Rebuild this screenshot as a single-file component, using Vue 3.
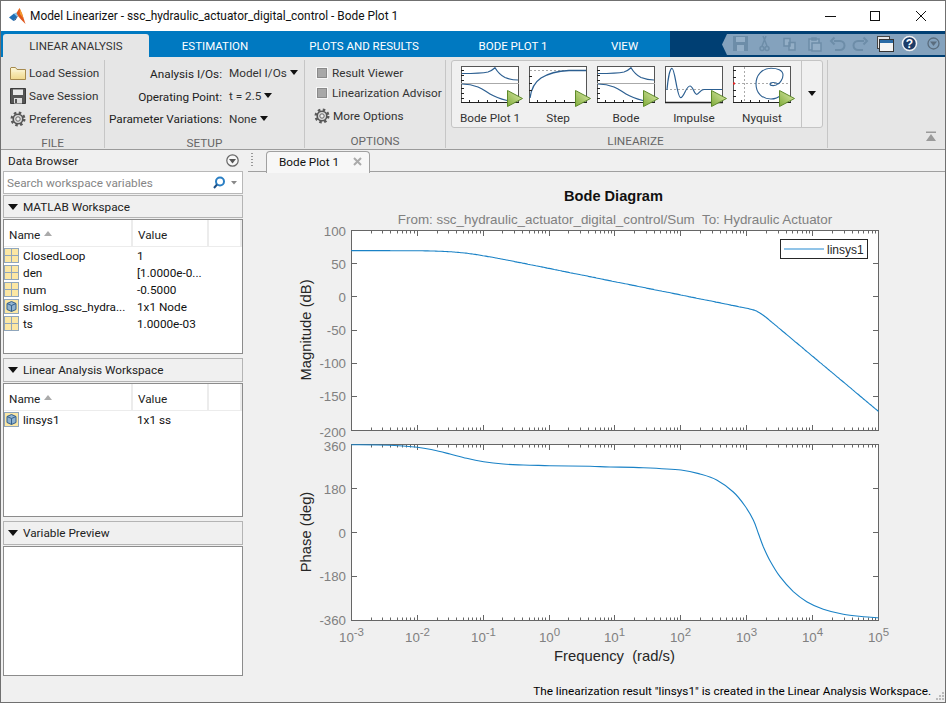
<script setup>
const fileItems = [
  { label: 'Load Session', icon: 'folder' },
  { label: 'Save Session', icon: 'floppy' },
  { label: 'Preferences', icon: 'gear' },
]
const thumbs = [
  { label: 'Bode Plot 1', kind: 'bode' },
  { label: 'Step', kind: 'step' },
  { label: 'Bode', kind: 'bode' },
  { label: 'Impulse', kind: 'impulse' },
  { label: 'Nyquist', kind: 'nyquist' },
]
const workspace = [
  { name: 'ClosedLoop', value: '1', icon: 'matrix' },
  { name: 'den', value: '[1.0000e-0...', icon: 'matrix' },
  { name: 'num', value: '-0.5000', icon: 'matrix' },
  { name: 'simlog_ssc_hydra...', value: '1x1 Node', icon: 'cube' },
  { name: 'ts', value: '1.0000e-03', icon: 'matrix' },
]
const linear = [{ name: 'linsys1', value: '1x1 ss', icon: 'cube' }]
const subtitle = 'From: ssc_hydraulic_actuator_digital_control/Sum  To: Hydraulic Actuator'
const xLabel = 'Frequency  (rad/s)'

const X0 = 351.3
const DEC = 65.9
const X = (d) => X0 + DEC * (d + 3)
const crisp = (v) => Math.round(v - 0.5) + 0.5

const majors = [-3, -2, -1, 0, 1, 2, 3, 4, 5].map((d) => ({ d, x: crisp(X(d)) }))
const minors = []
for (let d = -3; d < 5; d++) {
  for (let m = 2; m < 10; m++) minors.push(crisp(X(d + Math.log10(m))))
}
const magTicks = [
  { t: '100', y: 230.5, b: 236 },
  { t: '50', y: 263.7, b: 269 },
  { t: '0', y: 296.9, b: 302 },
  { t: '-50', y: 330.1, b: 335 },
  { t: '-100', y: 363.3, b: 368 },
  { t: '-150', y: 396.5, b: 401 },
  { t: '-200', y: 430.5, b: 437 },
]
const phaseTicks = [
  { t: '360', y: 444.5, b: 451 },
  { t: '180', y: 488.5, b: 494 },
  { t: '0', y: 532.5, b: 538 },
  { t: '-180', y: 576.5, b: 581 },
  { t: '-360', y: 620.5, b: 625 },
]

function smooth(p) {
  let s = `M${p[0][0].toFixed(1)} ${p[0][1].toFixed(1)}`
  for (let i = 0; i < p.length - 1; i++) {
    const a = p[Math.max(i - 1, 0)]
    const b = p[i]
    const c = p[i + 1]
    const d = p[Math.min(i + 2, p.length - 1)]
    const c1 = [b[0] + (c[0] - a[0]) / 6, b[1] + (c[1] - a[1]) / 6]
    const c2 = [c[0] - (d[0] - b[0]) / 6, c[1] - (d[1] - b[1]) / 6]
    s += `C${c1[0].toFixed(1)} ${c1[1].toFixed(1)} ${c2[0].toFixed(1)} ${c2[1].toFixed(1)} ${c[0].toFixed(1)} ${c[1].toFixed(1)}`
  }
  return s
}

const magPts = []
for (let d = -3; d <= 5.001; d += 0.04) {
  const w = Math.pow(10, d)
  const db =
    70 -
    10 * Math.log10(1 + Math.pow(w / 0.046, 2)) -
    (63 / 10) * Math.log10(1 + Math.pow(w / 1480, 10))
  magPts.push([X(d), 230.7 + ((100 - db) * 199.3) / 300])
}
const magPath = smooth(magPts)

const left = [
  [184, 44], [300, 46], [382, 52], [430, 60], [480, 72], [530, 85], [581, 95],
  [640, 102], [700, 105], [779, 107], [900, 109],
].map(([x, y]) => [290 + x / 3, 430 + y / 3])
const right = [
  [0, 111], [100, 113], [213, 120], [270, 132], [320, 150], [370, 186], [405, 228],
  [430, 270], [445, 310], [460, 350], [480, 392], [510, 440], [550, 485], [590, 515],
  [640, 538], [700, 553], [760, 560], [805, 563],
].map(([x, y]) => [610 + x / 3, 430 + y / 3])
const phasePath = smooth([...left, ...right])
</script>

<template>
  <div class="window">
    <header class="titlebar">
      <svg class="logo" width="17" height="17" viewBox="9 7 17 17">
        <polygon points="9,16.5 14,12.5 17,15.5 13.5,20" fill="#1f6fb5" />
        <polygon points="14,12.5 16.5,11.5 18,14 17,15.5" fill="#7cc0e8" />
        <polygon points="16.5,12 19.5,7 22,12.5 25.5,23 21,18.5 18,15" fill="#e0561b" />
        <polygon points="19.5,7 22,12.5 23.5,17.5 20,13" fill="#f39a2c" />
        <polygon points="13.5,20 17,15.5 18,15 15.5,19" fill="#123f78" />
      </svg>
      <span class="title-text">Model Linearizer - ssc_hydraulic_actuator_digital_control - Bode Plot 1</span>
      <div class="win-controls">
        <svg width="102" height="12" viewBox="0 0 102 12">
          <path d="M0 6.5H11" stroke="#111" fill="none" />
          <rect x="45.5" y="1.5" width="9" height="9" fill="none" stroke="#111" />
          <path d="M91 1L101 11M101 1L91 11" stroke="#111" fill="none" />
        </svg>
      </div>
    </header>

    <nav class="tabstrip">
      <div class="tabs">
        <div class="tab active">LINEAR ANALYSIS</div>
        <div class="tab">ESTIMATION</div>
        <div class="tab">PLOTS AND RESULTS</div>
        <div class="tab">BODE PLOT 1</div>
        <div class="tab">VIEW</div>
      </div>
      <div class="quick-wrap">
        <div class="quick">
          <svg width="224" height="21" viewBox="722 34 224 21">
            <g fill="#6d8da8">
              <path d="M733 36H748V51H733Z" />
              <rect x="736" y="37" width="9" height="5" fill="#93aec6" />
              <rect x="737" y="45" width="7" height="6" fill="#93aec6" />
            </g>
            <g fill="none" stroke="#6d8da8" stroke-width="1.5">
              <path d="M766 36L762 46M763 36L767 46" />
              <circle cx="762" cy="48.5" r="2" />
              <circle cx="767" cy="48.5" r="2" />
              <path d="M784 38.5H790V46H784ZM789 42.5H795V50H789Z" fill="#93aec6" />
              <path d="M809 39H819V50H809Z" fill="#93aec6" />
              <path d="M812 43H821V51H812Z" fill="#93aec6" />
              <path d="M812 38H816V40H812Z" />
              <path d="M834 41H840A4.5 4.5 0 0 1 840 50H835M834.500 37.500L831 41L834.500 44.500" stroke-width="2" />
              <path d="M864 41H858A4.500 4.500 0 0 0 858 50H863M863.500 37.500L867 41L863.500 44.500" stroke-width="2" />
            </g>
            <rect x="877.500" y="36.500" width="12" height="12" fill="#e8e8e8" stroke="#444" />
            <rect x="879.500" y="39.500" width="14" height="12" fill="#f4f4f4" stroke="#333" />
            <rect x="880" y="40" width="13" height="3" fill="#2a6aa5" />
            <circle cx="909.500" cy="43.500" r="7" fill="#1c3c68" stroke="#f2f2f2" stroke-width="1.500" />
            <text x="909.500" y="48" class="q-mark" text-anchor="middle">?</text>
            <circle cx="933.500" cy="43.500" r="5.500" fill="none" stroke="#5a6d7e" stroke-width="1.300" />
            <path d="M930 41.500H937L933.500 46Z" fill="#5a6d7e" />
          </svg>
        </div>
      </div>
    </nav>

    <section class="ribbon">
      <div class="group g-file">
        <div class="group-body file-list">
          <div v-for="item in fileItems" :key="item.label" class="row">
            <svg class="row-icon" width="16" height="16" viewBox="0 0 16 16">
              <template v-if="item.icon === 'folder'">
                <path d="M0.500 3V14.500H15.500V4.500H7L5.500 2.500H1Z" fill="url(#folderGrad)" stroke="#a68a4e" />
                <path d="M2 6H15" stroke="#f9f2d0" />
              </template>
              <template v-else-if="item.icon === 'floppy'">
                <path d="M0.500 0.500H15.500V15.500H0.500Z" fill="#555" stroke="#3c3c3c" />
                <rect x="3" y="1.500" width="10" height="5.500" fill="#e8e8e8" />
                <rect x="4" y="10" width="8" height="5.500" fill="#dcdcdc" />
                <rect x="5" y="11" width="2" height="4" fill="#555" />
              </template>
              <use v-else href="#gear" />
            </svg>
            <span>{{ item.label }}</span>
          </div>
        </div>
        <div class="group-label">FILE</div>
      </div>

      <div class="group g-setup">
        <div class="group-body setup-grid">
          <span class="setup-label down">Analysis I/Os:</span>
          <span class="setup-value">Model I/Os<i class="caret"></i></span>
          <span class="setup-label down">Operating Point:</span>
          <span class="setup-value">t = 2.5<i class="caret"></i></span>
          <span class="setup-label">Parameter Variations:</span>
          <span class="setup-value">None<i class="caret"></i></span>
        </div>
        <div class="group-label">SETUP</div>
      </div>

      <div class="group g-options">
        <div class="group-body options-list">
          <div class="check-row"><i class="checkbox"></i><span>Result Viewer</span></div>
          <div class="check-row"><i class="checkbox"></i><span>Linearization Advisor</span></div>
          <div class="more-row">
            <svg width="16" height="16" viewBox="0 0 16 16"><use href="#gear" /></svg>
            <span>More Options</span>
          </div>
        </div>
        <div class="group-label">OPTIONS</div>
      </div>

      <div class="group g-linearize">
        <div class="gallery">
          <div class="gallery-items">
            <div v-for="(th, i) in thumbs" :key="i" class="thumb">
              <svg class="thumb-svg" width="64" height="42" viewBox="0 0 64 42">
                <rect x="0.500" y="0.500" width="57" height="36" fill="#fff" stroke="#555" />
                <path d="M0 36.500H58" stroke="#222" />
                <template v-if="th.kind === 'bode'">
                  <path d="M0 17.500H58" stroke="#aaa" />
                  <path d="M1 7.500C10 7.500 20 7.500 27 6C30 5 32 3.500 34 1.700C36 5 39 9 44 11.500C48 13 53 14 57 14" fill="none" stroke="#2c5f91" stroke-width="1.200" />
                  <path d="M1 18C7 18 12 19 17 21C22 23 24 25 29 28C34 31 40 33 46 34.500" fill="none" stroke="#2c5f91" stroke-width="1.200" />
                  <path d="M0 4.500H3M0 9.500H3M0 14.500H3M0 22.500H3M0 27.500H3M0 32.500H3M8.500 37V34M17.500 37V34M26.500 37V34M35.500 37V34" stroke="#222" />
                </template>
                <template v-else-if="th.kind === 'step'">
                  <path d="M1 4.500H57" stroke="#aaa" stroke-dasharray="2 2" />
                  <path d="M1 32C2 24 6 16 12 12C20 7 30 5 40 4.500H57" fill="none" stroke="#2c5f91" stroke-width="1.300" />
                  <path d="M0 10.500H3M0 17.500H3M0 24.500H3M8.500 37V34M17.500 37V34M26.500 37V34M35.500 37V34" stroke="#222" />
                </template>
                <template v-else-if="th.kind === 'impulse'">
                  <path d="M1 23.500H57" stroke="#aaa" stroke-dasharray="2 2" />
                  <path d="M2 24C3 12 5 2.300 7 2.300C10 2.300 12 31.700 15.700 31.700C19 31.700 21 20 25 20C28 20 29 28.300 31.700 28.300C34 28.300 35 23.500 39 23.500H57" fill="none" stroke="#2c5f91" stroke-width="1.200" />
                  <path d="M0 36.500H58" stroke="#222" stroke-width="1.500" />
                </template>
                <template v-else>
                  <path d="M1 17.500H57" stroke="#aaa" stroke-dasharray="2 2" />
                  <path d="M11.500 1V36" stroke="#aaa" stroke-dasharray="2 2" />
                  <path d="M0 17.500H2" stroke="#e22" stroke-width="2" />
                  <path d="M45 17.500C43 20.500 37 20 37 18C37 16 43 16 45 18C47 17 50 13 50 9C50 4 44 2.300 38 2.300C29 2.300 23 9 23 18C23 27 29 33 38 33C42 33 45 32 48 29" fill="none" stroke="#2c5f91" stroke-width="1.100" />
                  <path d="M0 4.500H3M0 11.500H3M0 24.500H3M0 30.500H3M8.500 37V34M17.500 37V34M26.500 37V34M35.500 37V34" stroke="#222" />
                </template>
                <path d="M46.500 24.500V40.500L61.500 32.500Z" fill="url(#playGrad)" stroke="#5e8a2a" stroke-linejoin="round" />
              </svg>
              <span class="thumb-label">{{ th.label }}</span>
            </div>
          </div>
          <div class="gallery-more"><i class="caret"></i></div>
        </div>
        <div class="group-label">LINEARIZE</div>
      </div>

      <div class="ribbon-rest">
        <svg width="12" height="12" viewBox="0 0 12 12">
          <path d="M1 0.500H11V2H1Z M6 3L11 10H1Z" fill="#9a9a9a" />
        </svg>
      </div>
    </section>

    <main class="main">
      <aside class="sidebar">
        <div class="browser-head">
          <span>Data Browser</span>
          <svg width="13" height="13" viewBox="0 0 13 13">
            <circle cx="6.500" cy="6.500" r="5.700" fill="#f7f7f7" stroke="#666" stroke-width="1.200" />
            <path d="M3 5H10L6.500 9.500Z" fill="#555" />
          </svg>
        </div>
        <div class="search">
          <span class="placeholder">Search workspace variables</span>
          <svg width="24" height="14" viewBox="0 0 24 14">
            <circle cx="7" cy="5.500" r="4" fill="none" stroke="#2a7fc4" stroke-width="2" />
            <path d="M4 8.500L1 12" stroke="#1c4f86" stroke-width="2" />
            <path d="M18 5H24L21 8.500Z" fill="#888" />
          </svg>
        </div>

        <div class="section-head"><i class="tri"></i>MATLAB Workspace</div>
        <div class="table-box tall">
          <div class="t-head">
            <div class="th c-name">Name<i class="sort"></i></div>
            <div class="th c-value">Value</div>
            <div class="th c-extra"></div>
          </div>
          <div v-for="r in workspace" :key="r.name" class="t-row">
            <svg class="var-icon" width="15" height="15" viewBox="0 0 15 15"><use :href="'#' + r.icon" /></svg>
            <span class="t-name">{{ r.name }}</span>
            <span class="t-value">{{ r.value }}</span>
          </div>
        </div>

        <div class="section-head tall-head"><i class="tri"></i>Linear Analysis Workspace</div>
        <div class="table-box tall2">
          <div class="t-head">
            <div class="th c-name">Name<i class="sort"></i></div>
            <div class="th c-value">Value</div>
            <div class="th c-extra"></div>
          </div>
          <div v-for="r in linear" :key="r.name" class="t-row">
            <svg class="var-icon" width="15" height="15" viewBox="0 0 15 15"><use :href="'#' + r.icon" /></svg>
            <span class="t-name">{{ r.name }}</span>
            <span class="t-value">{{ r.value }}</span>
          </div>
        </div>

        <div class="section-head tall-head"><i class="tri"></i>Variable Preview</div>
        <div class="table-box preview"></div>
      </aside>

      <div class="content">
        <div class="doc-tabs">
          <div class="grip"></div>
          <div class="doc-tab">
            <span>Bode Plot 1</span>
            <svg width="9" height="9" viewBox="0 0 9 9">
              <path d="M1 1L8 8M8 1L1 8" stroke="#aaa" stroke-width="2" />
            </svg>
          </div>
        </div>

        <svg class="plot" width="697" height="507" viewBox="248 172 697 507">
          <rect x="351.500" y="230.500" width="527" height="200" fill="#fff" stroke="#666" />
          <rect x="351.500" y="444.500" width="527" height="176" fill="#fff" stroke="#666" />
          <g stroke="#666" fill="none">
            <template v-for="m in majors" :key="m.d">
              <path :d="`M${m.x} 231V236M${m.x} 430V425M${m.x} 445V450M${m.x} 620V615`" />
            </template>
            <template v-for="(x, i) in minors" :key="i">
              <path :d="`M${x} 231V233.500M${x} 430V427.500M${x} 445V447.500M${x} 620V617.500`" />
            </template>
            <template v-for="t in magTicks" :key="t.t">
              <path :d="`M352 ${crisp(t.y)}H357M878 ${crisp(t.y)}H873`" />
            </template>
            <template v-for="t in phaseTicks" :key="t.t">
              <path :d="`M352 ${crisp(t.y)}H357M878 ${crisp(t.y)}H873`" />
            </template>
          </g>
          <path :d="magPath" fill="none" stroke="#1a82c6" stroke-width="1.100" />
          <path :d="phasePath" fill="none" stroke="#1a82c6" stroke-width="1.100" />

          <text v-for="t in magTicks" :key="t.t" class="tick" x="346" :y="t.b" text-anchor="end">{{ t.t }}</text>
          <text v-for="t in phaseTicks" :key="t.t" class="tick" x="346" :y="t.b" text-anchor="end">{{ t.t }}</text>
          <text v-for="m in majors" :key="m.d" class="tick" :x="m.x" y="642" text-anchor="middle">10<tspan class="exp" dy="-6">{{ m.d }}</tspan></text>

          <text class="plot-title" x="613.500" y="201" text-anchor="middle">Bode Diagram</text>
          <text class="plot-sub" x="615" y="224" text-anchor="middle">{{ subtitle }}</text>
          <text class="axis-label" transform="translate(311 330) rotate(-90)" text-anchor="middle">Magnitude (dB)</text>
          <text class="axis-label" transform="translate(311 532) rotate(-90)" text-anchor="middle">Phase (deg)</text>
          <text class="axis-label" x="614.500" y="661" text-anchor="middle">{{ xLabel }}</text>

          <rect x="780.500" y="239.500" width="87" height="19" fill="#fff" stroke="#262626" />
          <path d="M784 249H824" stroke="#6cb0e0" stroke-width="1.600" />
          <text class="legend" x="827" y="254">linsys1</text>
        </svg>

        <div class="status">
          <span>The linearization result "linsys1" is created in the Linear Analysis Workspace.</span>
          <svg class="resize" width="10" height="10" viewBox="0 0 10 10">
            <path d="M7 1h2v2h-2zM4 4h2v2h-2zM7 4h2v2h-2zM1 7h2v2h-2zM4 7h2v2h-2zM7 7h2v2h-2z" fill="#bbb" />
          </svg>
        </div>
      </div>
    </main>

    <svg class="defs" width="0" height="0">
      <defs>
        <linearGradient id="playGrad" x1="0" y1="1" x2="1" y2="0">
          <stop offset="0" stop-color="#7fab3a" />
          <stop offset="1" stop-color="#e2eeb0" />
        </linearGradient>
        <linearGradient id="folderGrad" x1="0" y1="0" x2="0" y2="1">
          <stop offset="0" stop-color="#fdf7d6" />
          <stop offset="1" stop-color="#efd88c" />
        </linearGradient>
        <symbol id="gear" viewBox="0 0 16 16">
          <circle cx="8" cy="8" r="6.300" fill="none" stroke="#5a5a5a" stroke-width="2.400" stroke-dasharray="2.500 2.450" />
          <circle cx="8" cy="8" r="4.800" fill="#d8d8d8" stroke="#555" stroke-width="1.600" />
          <circle cx="8" cy="8" r="2.200" fill="#eee" stroke="#666" />
        </symbol>
        <symbol id="matrix" viewBox="0 0 15 15">
          <rect x="0.500" y="0.500" width="14" height="14" fill="#fbe7a4" stroke="#90a6bc" />
          <path d="M7.500 1V14M1 7.500H14" stroke="#90a6bc" />
        </symbol>
        <symbol id="cube" viewBox="0 0 15 15">
          <rect x="0.500" y="0.500" width="14" height="14" fill="#fbe7a4" stroke="#90a6bc" />
          <path d="M3 4.500L7.500 2.500L12 4.500V10.500L7.500 12.500L3 10.500Z" fill="#8fb2cf" stroke="#35608c" />
          <path d="M3 4.500L7.500 6.500L12 4.500M7.500 6.500V12.500" fill="none" stroke="#35608c" />
        </symbol>
      </defs>
    </svg>
  </div>
</template>

<style scoped>
.window {
  width: 946px;
  height: 703px;
  box-sizing: border-box;
  border: 1px solid #707070;
  background: #f0f0f0;
  display: flex;
  flex-direction: column;
  overflow: hidden;
  font-family: Roboto, "Noto Sans", sans-serif;
  font-size: 11.75px;
  color: #1a1a1a;
}
.titlebar {
  height: 30px;
  flex: none;
  background: #fff;
  display: flex;
  align-items: center;
  padding-left: 8px;
  font-size: 11.9px;
  color: #111;
}
.logo { flex: none; margin-right: 4px; }
.title-text { white-space: nowrap; }
.win-controls { margin-left: auto; padding-right: 18px; display: flex; }

.tabstrip {
  height: 26px;
  flex: none;
  background: #0079c1;
  display: flex;
}
.tabs {
  display: grid;
  grid-template-columns: 146px 132px 166px 132px 91px;
  margin-left: 2px;
  padding-top: 3px;
  height: 23px;
}
.tab {
  color: #fff;
  text-align: center;
  line-height: 25px;
  font-size: 11.5px;
  white-space: nowrap;
}
.tab.active {
  background: #e6e6e6;
  color: #333;
  border-radius: 3px 3px 0 0;
}
.quick-wrap {
  flex: 1;
  background: #003f73;
  padding: 3px 0 2px 52px;
  min-width: 0;
}
.quick {
  height: 21px;
  background: #84a2bd;
  clip-path: polygon(5px 0, 100% 0, 100% 100%, 5px 100%, 0 50%);
}
.quick svg { display: block; }
.q-mark { font: bold 12px "Liberation Sans", sans-serif; fill: #fff; }

.ribbon {
  height: 93px;
  flex: none;
  box-sizing: border-box;
  background: #e6e6e6;
  border-bottom: 1px solid #9a9a9a;
  display: flex;
}
.group {
  display: flex;
  flex-direction: column;
  box-sizing: border-box;
  border-right: 1px solid #c6c6c6;
  margin: 3px 0 1px;
  flex: none;
}
.g-file { width: 104px; }
.g-setup { width: 200px; }
.g-options { width: 141px; }
.g-linearize { width: 382px; }
.group-body { flex: 1; }
.group-label {
  flex: none;
  box-sizing: border-box;
  height: 20px;
  padding-top: 6px;
  line-height: 14px;
  text-align: center;
  color: #666;
}
.file-list { padding: 1px 0 0 9px; }
.row {
  height: 23px;
  display: flex;
  align-items: center;
  gap: 3px;
  color: #333;
  white-space: nowrap;
}
.row-icon { flex: none; }
.setup-grid {
  display: grid;
  grid-template-columns: 117px auto;
  column-gap: 7px;
  grid-auto-rows: 23px;
  align-items: center;
  padding-top: 1px;
  white-space: nowrap;
}
.setup-label { text-align: right; color: #222; }
.setup-label.down { margin-top: 3px; }
.setup-value { color: #333; display: flex; align-items: center; gap: 3px; }
.caret {
  display: inline-block;
  width: 0;
  height: 0;
  border-left: 4px solid transparent;
  border-right: 4px solid transparent;
  border-top: 5px solid #111;
}
.options-list { padding: 3px 0 0 11px; color: #333; white-space: nowrap; }
.check-row { height: 20px; display: flex; align-items: center; gap: 5px; }
.checkbox {
  width: 8px;
  height: 8px;
  background: #a8a8a8;
  border: 1px solid #8a8a8a;
  box-shadow: 0 0 0 1px #f7f7f7;
  display: block;
  margin-left: 1px;
}
.more-row { height: 24px; display: flex; align-items: center; gap: 3px; margin-top: 1px; margin-left: -2px; }
.gallery {
  margin: 0 0 0 5px;
  width: 372px;
  height: 68px;
  box-sizing: border-box;
  background: #f0f0f0;
  border: 1px solid #c4c4c4;
  border-radius: 3px;
  display: flex;
  flex: none;
}
.g-linearize .group-label { margin-top: auto; padding-right: 2px; }
.gallery-items {
  flex: 1;
  display: flex;
  gap: 10px;
  padding: 5px 0 0 9px;
}
.thumb {
  width: 58px;
  display: flex;
  flex-direction: column;
  align-items: center;
}
.thumb-svg { flex: none; align-self: flex-start; display: block; height: 42px; }
.thumb-label {
  margin-top: 3px;
  color: #333;
  white-space: nowrap;
}
.gallery-more {
  width: 20px;
  border-left: 1px solid #c4c4c4;
  display: flex;
  align-items: center;
  justify-content: center;
  padding-bottom: 2px;
}
.ribbon-rest {
  flex: 1;
  display: flex;
  align-items: flex-end;
  justify-content: flex-end;
  padding: 0 8px 6px 0;
}

.main { flex: 1; display: flex; min-height: 0; }
.sidebar {
  width: 247px;
  flex: none;
  box-sizing: border-box;
  padding: 0 5px 0 2px;
  display: flex;
  flex-direction: column;
}
.browser-head {
  height: 21px;
  flex: none;
  display: flex;
  align-items: center;
  justify-content: space-between;
  padding: 0 4px 0 5px;
  color: #222;
}
.search {
  height: 23px;
  flex: none;
  box-sizing: border-box;
  background: #fff;
  border: 1px solid #b8b8b8;
  display: flex;
  align-items: center;
  justify-content: space-between;
  padding: 0 5px 0 3px;
  margin-bottom: 1px;
}
.placeholder { color: #858585; }
.section-head {
  height: 23px;
  flex: none;
  box-sizing: border-box;
  background: #f0f0f0;
  border: 1px solid #b4b4b4;
  display: flex;
  align-items: center;
  gap: 5px;
  padding-left: 4px;
  color: #222;
  margin-bottom: 1px;
  white-space: nowrap;
}
.tall-head { height: 24px; }
.tri {
  display: block;
  width: 0;
  height: 0;
  border-left: 5px solid transparent;
  border-right: 5px solid transparent;
  border-top: 6px solid #111;
}
.table-box {
  flex: none;
  box-sizing: border-box;
  background: #fff;
  border: 1px solid #8c8c8c;
  margin-bottom: 4px;
}
.tall { height: 135px; }
.tall2 { height: 134px; }
.preview { height: 130px; margin-bottom: 0; }
.t-head {
  height: 27px;
  display: grid;
  grid-template-columns: 129px 76px 33px;
}
.th {
  display: flex;
  align-items: center;
  gap: 4px;
  border-right: 2px solid #ececec;
  border-bottom: 1px solid #ececec;
  color: #222;
  box-sizing: border-box;
  padding-top: 3px;
}
.c-name { padding-left: 5px; }
.c-value { padding-left: 5px; }
.sort {
  display: block;
  width: 0;
  height: 0;
  border-left: 4.500px solid transparent;
  border-right: 4.500px solid transparent;
  border-bottom: 5px solid #aaa;
  margin-bottom: 2px;
}
.t-row {
  height: 17px;
  display: grid;
  grid-template-columns: 19px 114px auto;
  align-items: center;
  color: #111;
  white-space: nowrap;
}
.var-icon { display: block; }

.content { flex: 1; display: flex; flex-direction: column; min-width: 0; }
.doc-tabs {
  height: 22px;
  flex: none;
  box-sizing: border-box;
  border-bottom: 1px solid #a0a0a0;
  display: flex;
  padding-left: 3px;
}
.grip {
  width: 2px;
  height: 15px;
  margin-top: 3px;
  background: repeating-linear-gradient(#999 0 1px, transparent 1px 3px);
  margin-right: 13px;
}
.doc-tab {
  width: 104px;
  height: 22px;
  margin-top: 1px;
  box-sizing: border-box;
  background: #f7f7f7;
  border: 1px solid #a0a0a0;
  border-bottom: none;
  border-radius: 4px 4px 0 0;
  display: flex;
  align-items: center;
  justify-content: space-between;
  padding: 0 7px 2px 12px;
  color: #111;
}
.plot { display: block; flex: none; }
.tick { font: 13.300px "Liberation Sans", sans-serif; fill: #808080; }
.exp { font-size: 11.500px; }
.plot-title { font: bold 14.600px "Liberation Sans", sans-serif; fill: #111; }
.plot-sub { font: 13.400px "Liberation Sans", sans-serif; fill: #808080; white-space: pre; }
.axis-label { font: 14.800px "Liberation Sans", sans-serif; fill: #262626; white-space: pre; }
.legend { font: 12px "Liberation Sans", sans-serif; fill: #262626; }
.status {
  flex: 1;
  display: flex;
  align-items: center;
  justify-content: flex-end;
  color: #000;
  gap: 4px;
  white-space: nowrap;
}
.resize { align-self: flex-end; margin-bottom: 1px; }
.defs { flex: none; display: block; }
</style>
